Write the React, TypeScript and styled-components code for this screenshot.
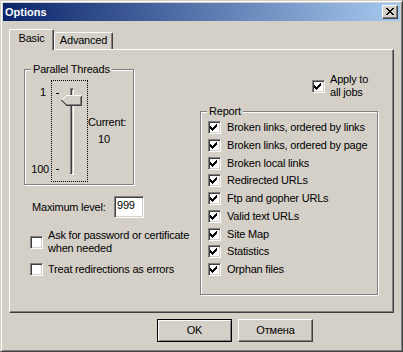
import * as React from "react";
import styled, { createGlobalStyle } from "styled-components";

const face = "#d4d0c8";
const shadow = "#808080";
const dark = "#404040";

const GlobalStyle = createGlobalStyle`
  html, body {
    margin: 0;
    padding: 0;
    background: ${face};
  }
  body {
    font-family: "Liberation Sans", Arial, sans-serif;
    font-size: 11px;
    letter-spacing: -0.2px;
    line-height: 13px;
    color: #000;
  }
  * {
    box-sizing: border-box;
  }
`;

const Window = styled.div`
  width: 403px;
  height: 352px;
  padding: 2px;
  display: flex;
  flex-direction: column;
  background: ${face};
  border: 1px solid;
  border-color: ${face} ${dark} ${dark} ${face};
  box-shadow: inset 1px 1px 0 #fff, inset -1px -1px 0 ${shadow};
`;

const TitleBar = styled.div`
  height: 18px;
  flex: 0 0 18px;
  display: flex;
  align-items: center;
  justify-content: space-between;
  padding: 0 2px;
  background: linear-gradient(to right, #0a246a, #a6caf0);
`;

const Title = styled.span`
  color: #fff;
  font-weight: bold;
  letter-spacing: 0;
`;

const CloseButton = styled.div`
  width: 16px;
  height: 14px;
  display: flex;
  align-items: center;
  justify-content: center;
  background: ${face};
  border: 1px solid;
  border-color: #fff ${dark} ${dark} #fff;
  box-shadow: inset -1px -1px 0 ${shadow};
  padding: 0 1px 1px 0;
`;

const TabStrip = styled.div`
  display: flex;
  align-items: flex-end;
  padding: 8px 0 0 6px;
`;

const Tab = styled.div<{ $active?: boolean; $width: number }>`
  position: relative;
  z-index: ${(p) => (p.$active ? 1 : 0)};
  width: ${(p) => p.$width}px;
  height: ${(p) => (p.$active ? 21 : 17)}px;
  margin-bottom: ${(p) => (p.$active ? 0 : 1)}px;
  padding-top: ${(p) => (p.$active ? 2 : 1)}px;
  text-align: center;
  background: ${face};
  border: 1px solid;
  border-bottom: none;
  border-color: #fff ${dark} transparent #fff;
  border-radius: 2px 2px 0 0;
  box-shadow: inset -1px 0 0 ${shadow};
`;

const Panel = styled.div`
  height: 264px;
  margin: -1px 6px 0;
  display: flex;
  padding: 19px 0 0 14px;
  border: 1px solid;
  border-color: #fff ${dark} ${dark} #fff;
  box-shadow: inset -1px -1px 0 ${shadow};
`;

const LeftColumn = styled.div`
  width: 176px;
  display: flex;
  flex-direction: column;
`;

const RightColumn = styled.div`
  width: 179px;
  display: flex;
  flex-direction: column;
  padding-top: 4px;
`;

const GroupBox = styled.div<{ $width: number; $height: number }>`
  position: relative;
  width: ${(p) => p.$width}px;
  height: ${(p) => p.$height}px;
  border: 1px solid ${shadow};
  box-shadow: inset 1px 1px 0 #fff, 1px 1px 0 #fff;
`;

const GroupLabel = styled.span`
  position: absolute;
  top: -7px;
  left: 6px;
  padding: 0 2px;
  background: ${face};
`;

const SliderRow = styled.div`
  display: flex;
  align-items: flex-start;
  padding-top: 10px;
`;

const ScaleColumn = styled.div`
  width: 24px;
  display: flex;
  flex-direction: column;
  gap: 64px;
  padding-top: 6px;
  text-align: right;
`;

const ScaleLabel = styled.span<{ $inset?: number }>`
  padding-right: ${(p) => p.$inset ?? 0}px;
`;

const FocusRect = styled.div`
  position: relative;
  width: 37px;
  height: 102px;
  margin-left: 2px;
  border: 1px dotted #000;
`;

const Track = styled.div`
  width: 4px;
  height: 87px;
  margin: 7px 0 0 18px;
  border: 1px solid;
  border-color: ${shadow} #fff #fff ${shadow};
  box-shadow: inset 1px 1px 0 ${dark};
`;

const Tick = styled.div`
  position: absolute;
  left: 4px;
  width: 3px;
  height: 1px;
  background: #000;
`;

const Thumb = styled.svg`
  position: absolute;
  left: 9px;
  display: block;
`;

const CurrentColumn = styled.div`
  display: flex;
  flex-direction: column;
  padding-top: 36px;
`;

const CurrentValue = styled.span`
  margin-top: 4px;
  padding-left: 10px;
`;

const LevelRow = styled.div`
  display: flex;
  align-items: center;
  margin-top: 11px;
  padding-left: 8px;
`;

const LevelLabel = styled.span`
  width: 82px;
`;

const Edit = styled.input`
  width: 30px;
  height: 22px;
  padding: 0 0 4px 2px;
  margin: 0;
  font: inherit;
  letter-spacing: inherit;
  color: #000;
  background: #fff;
  border: 1px solid;
  border-color: ${shadow} #fff #fff ${shadow};
  box-shadow: inset 1px 1px 0 ${dark}, inset -1px -1px 0 ${face};
  outline: none;
`;

const CheckRow = styled.label<{ $gap: number; $top?: number; $indent?: number }>`
  display: flex;
  align-items: center;
  gap: ${(p) => p.$gap}px;
  margin-top: ${(p) => p.$top ?? 0}px;
  padding-left: ${(p) => p.$indent ?? 0}px;
`;

const Box = styled.span`
  flex: 0 0 13px;
  width: 13px;
  height: 13px;
  background: #fff;
  border: 1px solid;
  border-color: ${shadow} #fff #fff ${shadow};
  box-shadow: inset 1px 1px 0 ${dark}, inset -1px -1px 0 ${face};
`;

const ReportList = styled.div`
  display: flex;
  flex-direction: column;
  gap: 4.75px;
  padding: 9px 0 0 7px;
`;

const ApplyRow = styled(CheckRow)`
  margin-left: 112px;
  margin-bottom: 12px;
`;

const ButtonRow = styled.div`
  display: flex;
  justify-content: flex-end;
  gap: 6px;
  margin-top: 6px;
  padding-right: 87px;
`;

const Button = styled.button<{ $default?: boolean }>`
  width: 75px;
  height: 23px;
  padding: 0;
  font: inherit;
  letter-spacing: inherit;
  color: #000;
  background: ${face};
  border: 1px solid;
  border-color: ${(p) =>
    p.$default ? "#000" : `#fff ${dark} ${dark} #fff`};
  box-shadow: ${(p) =>
    p.$default
      ? `inset 1px 1px 0 #fff, inset -1px -1px 0 ${shadow}`
      : `inset -1px -1px 0 ${shadow}`};
`;

const checkCols = [4, 5, 6, 5, 4, 3, 2];

function CheckMark() {
  return (
    <svg width="11" height="11" viewBox="0 0 11 11" shapeRendering="crispEdges" style={{ display: "block" }}>
      {checkCols.map((top, i) => (
        <rect key={i} x={1 + i} y={top} width="1" height="3" fill="#000" />
      ))}
    </svg>
  );
}

function CheckBox({ checked }: { checked: boolean }) {
  return <Box>{checked && <CheckMark />}</Box>;
}

const closeRows = [
  [0, 1, 6, 7],
  [1, 2, 5, 6],
  [2, 3, 4, 5],
  [3, 4],
  [2, 3, 4, 5],
  [1, 2, 5, 6],
  [0, 1, 6, 7],
];

function CloseGlyph() {
  return (
    <svg width="8" height="7" viewBox="0 0 8 7" shapeRendering="crispEdges">
      {closeRows.map((xs, y) =>
        xs.map((x) => <rect key={`${x}-${y}`} x={x} y={y} width="1" height="1" fill="#000" />)
      )}
    </svg>
  );
}

const reportItems = [
  "Broken links, ordered by links",
  "Broken links, ordered by page",
  "Broken local links",
  "Redirected URLs",
  "Ftp and gopher URLs",
  "Valid text URLs",
  "Site Map",
  "Statistics",
  "Orphan files",
];

const threads = { min: 1, max: 100, value: 10 };

export default function App() {
  const span = 76;
  const thumbTop = Math.round(12 + ((threads.value - threads.min) / (threads.max - threads.min)) * span - 5);

  return (
    <>
      <GlobalStyle />
      <Window>
        <TitleBar>
          <Title>Options</Title>
          <CloseButton>
            <CloseGlyph />
          </CloseButton>
        </TitleBar>

        <TabStrip>
          <Tab $active $width={45}>Basic</Tab>
          <Tab $width={59}>Advanced</Tab>
        </TabStrip>

        <Panel>
          <LeftColumn>
            <GroupBox $width={110} $height={116}>
              <GroupLabel>Parallel Threads</GroupLabel>
              <SliderRow>
                <ScaleColumn>
                  <ScaleLabel $inset={3}>{threads.min}</ScaleLabel>
                  <ScaleLabel>{threads.max}</ScaleLabel>
                </ScaleColumn>
                <FocusRect>
                  <Track />
                  <Tick style={{ top: 12 }} />
                  <Tick style={{ top: 12 + span }} />
                  <Thumb
                    width="21"
                    height="11"
                    viewBox="0 0 21 11"
                    shapeRendering="crispEdges"
                    style={{ top: thumbTop }}
                  >
                    <polygon points="0.5,5.5 5.5,0.5 20.5,0.5 20.5,10.5 5.5,10.5" fill={face} />
                    <polyline points="0.5,5.5 5.5,0.5 19.5,0.5" fill="none" stroke="#fff" />
                    <polyline points="20.5,0.5 20.5,10.5 5.5,10.5 0.5,5.5" fill="none" stroke={dark} />
                    <polyline points="19.5,1.5 19.5,9.5 5.5,9.5 1.5,5.5" fill="none" stroke={shadow} />
                  </Thumb>
                </FocusRect>
                <CurrentColumn>
                  <span>Current:</span>
                  <CurrentValue>{threads.value}</CurrentValue>
                </CurrentColumn>
              </SliderRow>
            </GroupBox>

            <LevelRow>
              <LevelLabel>Maximum level:</LevelLabel>
              <Edit defaultValue="999" />
            </LevelRow>

            <CheckRow $gap={5} $top={11} $indent={6}>
              <CheckBox checked={false} />
              <span>
                Ask for password or certificate
                <br />
                when needed
              </span>
            </CheckRow>

            <CheckRow $gap={5} $top={8} $indent={6}>
              <CheckBox checked={false} />
              <span>Treat redirections as errors</span>
            </CheckRow>
          </LeftColumn>

          <RightColumn>
            <ApplyRow $gap={5}>
              <CheckBox checked />
              <span>
                Apply to
                <br />
                all jobs
              </span>
            </ApplyRow>

            <GroupBox $width={178} $height={184}>
              <GroupLabel>Report</GroupLabel>
              <ReportList>
                {reportItems.map((item) => (
                  <CheckRow key={item} $gap={6}>
                    <CheckBox checked />
                    <span>{item}</span>
                  </CheckRow>
                ))}
              </ReportList>
            </GroupBox>
          </RightColumn>
        </Panel>

        <ButtonRow>
          <Button $default>OK</Button>
          <Button>Отмена</Button>
        </ButtonRow>
      </Window>
    </>
  );
}
